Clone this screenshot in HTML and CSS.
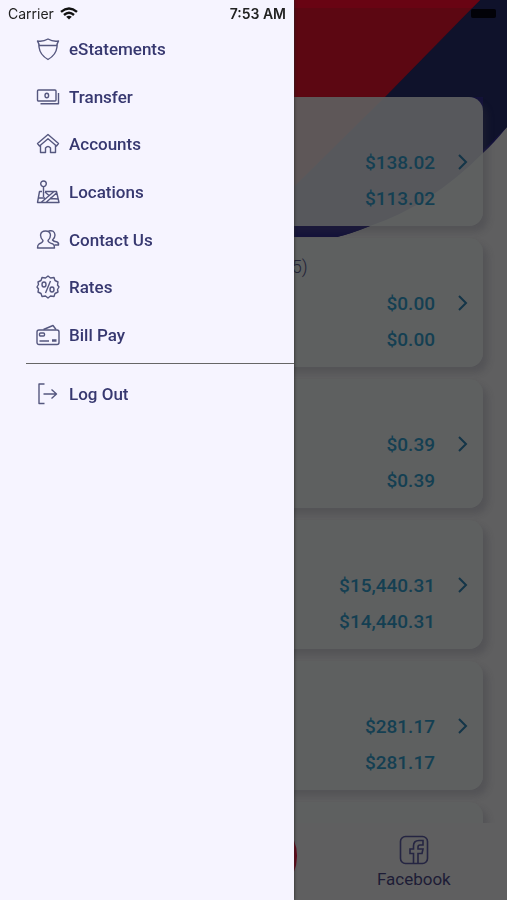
FILE: index.html
```html
<!DOCTYPE html>
<html lang="en">
<head>
<meta charset="utf-8">
<meta name="viewport" content="width=device-width, initial-scale=1">
<title>Accounts</title>
<link rel="stylesheet" href="styles.css">
</head>
<body>
<aside class="drawer">
  <div class="status">
    <span class="carrier">Carrier
      <svg width="18" height="13" viewBox="0 0 18 13" fill="none" stroke="#111" stroke-width="2.4"><path d="M1 4.8Q9-2 17 4.8M4 8Q9 3.6 14 8"/><path d="M6.2 9.8Q9 7.6 11.8 9.8L9 12.6Z" fill="#111" stroke="none"/></svg>
    </span>
    <span class="time">7:53 AM</span>
  </div>
  <nav>
    <ul class="menu">
      <li><a href="#"><svg class="icon" viewBox="0 0 24 24"><path d="M1.500 4Q7 5 12 2Q17 5 22.500 4Q20.500 7 21 10Q20 18 12 22.500Q4 18 3 10Q3.500 7 1.500 4ZM3 8.500H21"/></svg>eStatements</a></li>
      <li><a href="#"><svg class="icon" viewBox="0 0 24 24"><rect x="1.500" y="5" width="18.500" height="11" rx="1"/><path d="M4.500 18.800H22.500V8"/><ellipse cx="10.800" cy="10.500" rx="1.800" ry="2.300"/></svg>Transfer</a></li>
      <li><a href="#"><svg class="icon" viewBox="0 0 24 24"><path d="M1.500 11.500L12 2.500L22.500 11.500L20.500 14L12 6.800L3.500 14ZM4.500 13.500V20.500H9.500V16Q12 13 14.500 16V20.500H19.500V13.500"/></svg>Accounts</a></li>
      <li><a href="#"><svg class="icon" viewBox="0 0 24 24"><circle cx="7.500" cy="3.800" r="2.800"/><path d="M7.500 6.600V17M6 11.500H3.500L1.500 22.500H23L20.500 11.500H9M2.500 18H9M5 22.500L18 11.500M10 22.500L20.500 13M14 18.500L22 19M9 12L13 15.500"/></svg>Locations</a></li>
      <li><a href="#"><svg class="icon" viewBox="0 0 24 24"><path d="M7 12.500Q4.500 10 4.500 7Q5 3 9.500 3Q14 3 14.500 7Q14.500 10 12 12.500Q12 14.500 17 16Q18.500 17 18.500 20H1.500Q1.500 17 3 16Q7 14.500 7 12.500ZM12.500 3Q18.500 1.500 19 7Q19 10 16.500 12Q17.500 13.500 21 14Q23 15 22.500 17H18.500"/></svg>Contact Us</a></li>
      <li><a href="#"><svg class="icon" viewBox="0 0 24 24"><path d="M12 1L14.500 3L18 2.500L19 5.500L22 7L21.500 10L23 12L21.500 14.500L22 17L19 18.500L18 21.500L14.500 21L12 23L9.500 21L6 21.500L5 18.500L2 17L2.500 14L1 12L2.500 9.500L2 7L5 5.500L6 2.500L9.500 3ZM9.500 18L14.500 6"/><ellipse cx="8" cy="9.500" rx="2" ry="2.500"/><ellipse cx="16" cy="14.500" rx="2" ry="2.500"/></svg>Rates</a></li>
      <li><a href="#"><svg class="icon" viewBox="0 0 24 24"><rect x="1" y="7" width="22" height="14.500" rx="2"/><path d="M7.500 6.500L17 2.500L20 6.500M3.500 18H13M16 18H20.500M16 17H20.500"/><rect x="3.500" y="10" width="5" height="3" rx="1"/></svg>Bill Pay</a></li>
    </ul>
    <ul class="menu menu-end">
      <li><a href="#"><svg class="icon" viewBox="0 0 24 24"><path d="M8.500 2H3V21.500H8.500M7.500 12H20.500M15.500 7.500L20.500 12L15.500 16.500"/></svg>Log Out</a></li>
    </ul>
  </nav>
</aside>

<main class="page">
  <svg class="art" viewBox="0 0 507 240" preserveAspectRatio="xMaxYMin slice" aria-hidden="true">
    <path d="M0 0H507V127Q494 143 483 153Q430 206 370 226Q350 234 337 237H0Z" fill="#14123a"/>
    <path d="M0 0H507V127L483 150V97H0Z" fill="#0f122b"/>
    <path d="M0 0H480L385 97L240 240H0Z" fill="#5c0712"/>
    <path d="M0 0H480L472 8H0Z" fill="#690413"/>
    <path d="M0 226H370Q350 234 337 237H0Z" fill="#14123a"/>
  </svg>
  <span class="battery"></span>
  <div class="cards">
    <section class="card"><div class="sums"><span>$138.02</span><span>$113.02</span></div><svg class="chev" viewBox="0 0 12 18"><path d="M2 2L9 9L2 16"/></svg></section>
    <section class="card"><h2 class="name">(5)</h2><div class="sums"><span>$0.00</span><span>$0.00</span></div><svg class="chev" viewBox="0 0 12 18"><path d="M2 2L9 9L2 16"/></svg></section>
    <section class="card"><div class="sums"><span>$0.39</span><span>$0.39</span></div><svg class="chev" viewBox="0 0 12 18"><path d="M2 2L9 9L2 16"/></svg></section>
    <section class="card"><div class="sums"><span>$15,440.31</span><span>$14,440.31</span></div><svg class="chev" viewBox="0 0 12 18"><path d="M2 2L9 9L2 16"/></svg></section>
    <section class="card"><div class="sums"><span>$281.17</span><span>$281.17</span></div><svg class="chev" viewBox="0 0 12 18"><path d="M2 2L9 9L2 16"/></svg></section>
    <section class="card"></section>
  </div>
  <footer class="tabs">
    <span></span>
    <span class="round"></span>
    <a href="#" class="tab">
      <svg width="30" height="30" viewBox="0 0 30 30"><rect x="1.500" y="1.500" width="27" height="27" rx="5"/><path d="M14.500 28V18.500H11V14H14.500V11Q14.500 5.500 20 5.500H24V10H21Q19 10 19 12V14H24L23 18.500H19V28"/></svg>
      Facebook
    </a>
  </footer>
</main>
</body>
</html>
```
FILE: styles.css
```css
* { box-sizing: border-box; }

body {
  margin: 0;
  background: #5f5f60;
  font-family: Roboto, "Liberation Sans", sans-serif;
}

a { color: inherit; text-decoration: none; }
svg { fill: none; flex: none; }

/* Drawer that slides over the page */
.drawer {
  position: fixed;
  z-index: 2;
  top: 0;
  bottom: 0;
  left: 0;
  width: 58%;
  background: #f6f4ff;
  box-shadow: 0 0 3px #222;
}

.status {
  display: flex;
  justify-content: space-between;
  align-items: center;
  height: 25px;
  padding: 2px 8px 0;
  font: 14px/20px Inter, sans-serif;
  color: #222;
}

.carrier { display: flex; align-items: center; gap: 6px; }
.time { font-weight: 600; }

.menu {
  display: grid;
  grid-auto-rows: 1fr;
  height: 334px;
  margin: 0;
  padding: 0 0 0 36px;
  list-style: none;
}

.menu a {
  display: flex;
  align-items: center;
  gap: 9px;
  height: 100%;
  font-size: 17px;
  font-weight: 500;
  color: #373870;
}

.icon {
  width: 24px;
  height: 24px;
  stroke: #55577f;
  stroke-width: 1.4;
  stroke-linejoin: round;
}

.menu-end {
  height: 60px;
  margin: 4px 0 0 26px;
  padding-left: 10px;
  border-top: 1px solid #666;
}

/* Dimmed page */
.page {
  position: relative;
  display: flex;
  flex-direction: column;
  height: 100vh;
  overflow: hidden;
}

.art {
  position: absolute;
  top: 0;
  right: 0;
  width: 100%;
  height: 240px;
}

.battery {
  position: absolute;
  top: 9px;
  right: 11px;
  width: 25px;
  height: 9px;
  border-radius: 2px;
  background: #020208;
}

.cards {
  position: relative;
  flex: 1;
  min-height: 0;
  overflow: hidden;
  padding: 97px 24px 0;
}

.card {
  position: relative;
  display: flex;
  justify-content: flex-end;
  gap: 22px;
  height: 129px;
  margin-bottom: 12px;
  padding: 47px 14px 0;
  border-radius: 0 14px 14px 0;
  background: rgba(94, 96, 96, 0.9);
  box-shadow: 5px 6px 6px rgba(50, 50, 60, 0.25);
}

.name {
  position: absolute;
  top: 17px;
  left: 262px;
  margin: 0;
  font-size: 18px;
  line-height: 24px;
  font-weight: 300;
  color: #242438;
}

.sums {
  display: grid;
  grid-auto-rows: 36px;
  align-items: center;
  text-align: right;
  font-size: 19px;
  font-weight: 500;
  color: #143f52;
}

.chev {
  width: 12px;
  height: 18px;
  margin-top: 9px;
  stroke: #143548;
  stroke-width: 2;
}

.tabs {
  position: relative;
  display: grid;
  grid-template-columns: repeat(3, 1fr);
  align-items: center;
  justify-items: center;
  height: 77px;
  padding: 0 13px;
  background: #5f5f60;
}

.round {
  width: 88px;
  height: 88px;
  margin: -30px 0 -18px;
  border-radius: 50%;
  background: #650719;
}

.tab {
  display: flex;
  flex-direction: column;
  align-items: center;
  gap: 3px;
  padding-top: 2px;
  font-size: 17px;
  line-height: 22px;
  color: #1d1c36;
}

.tab svg {
  stroke: #252542;
  stroke-width: 1.6;
}
```
